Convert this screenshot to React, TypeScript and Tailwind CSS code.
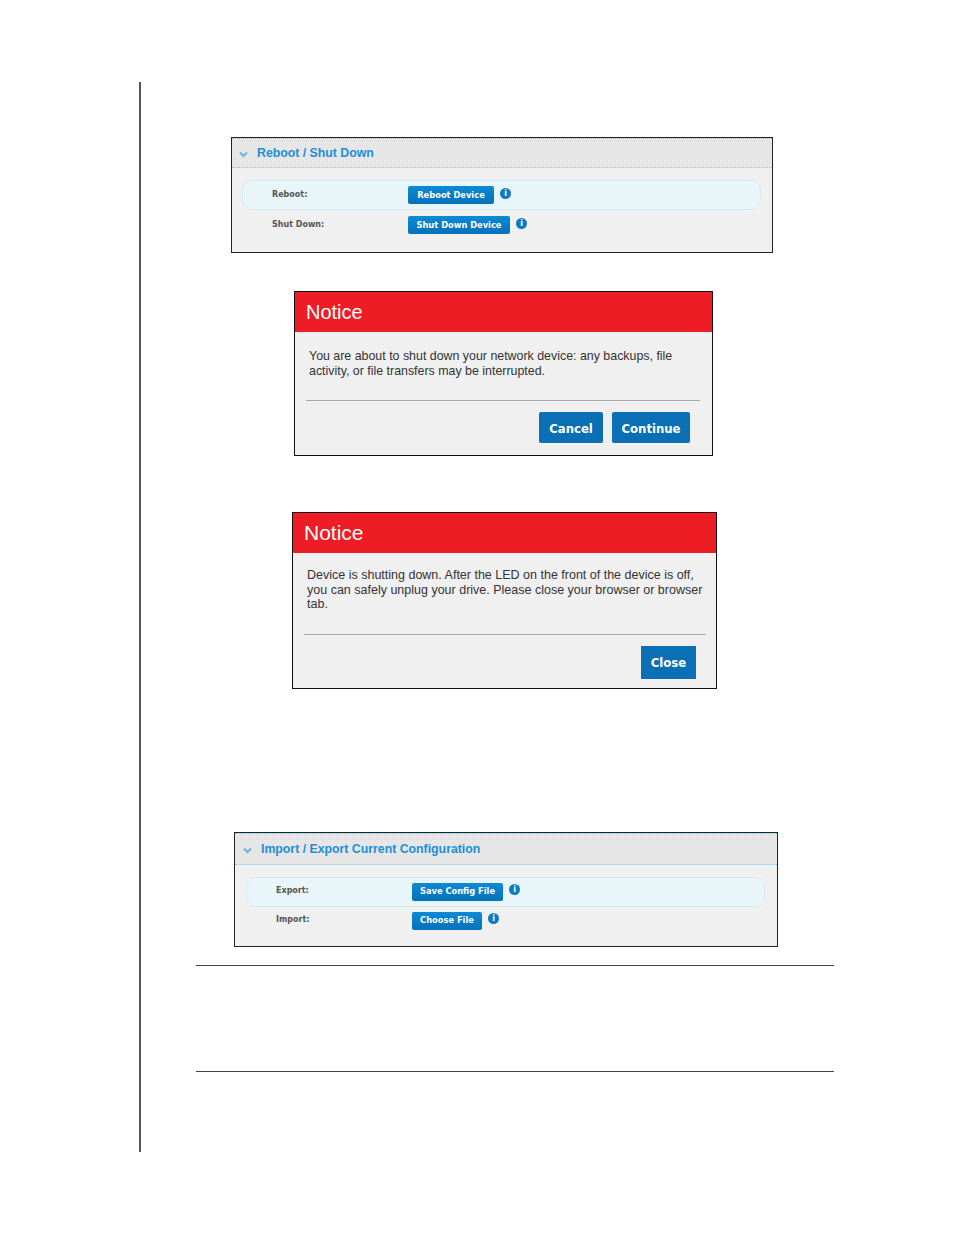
function InfoDot() {
  return (
    <span className="flex h-[11px] w-[11px] items-center justify-center rounded-full bg-[#0a7cc4] text-white">
      <span className="font-['DejaVu_Sans'] text-[8px] leading-none font-bold">i</span>
    </span>
  );
}

function Chevron() {
  return (
    <svg width="9" height="7" viewBox="0 0 9 7" className="mt-[2px]">
      <path d="M1 1.5 L4.5 5 L8 1.5" fill="none" stroke="#6fb2da" strokeWidth="2" />
    </svg>
  );
}

function SmallButton({ label, width, className }: { label: string; width: string; className: string }) {
  return (
    <span
      className={`flex h-[18px] items-center justify-center rounded-[2px] bg-gradient-to-b from-[#0d8ad6] to-[#0671b8] font-['DejaVu_Sans'] text-[8.3px] font-bold text-white ${width} ${className}`}
    >
      {label}
    </span>
  );
}

interface SettingRow {
  label: string;
  button: string;
  width: string;
}

function SettingsPanel({
  title,
  rows,
  className,
  headerClass,
  pillClass,
  rowClass,
  infoClass,
  labelClass,
  buttonClass,
}: {
  title: string;
  rows: SettingRow[];
  className: string;
  headerClass: string;
  pillClass: string;
  rowClass: string;
  infoClass: string;
  labelClass: string;
  buttonClass: string;
}) {
  return (
    <div className={`border border-[#222] bg-[#f0f0f0] ${className}`}>
      <div
        className={`flex items-center gap-[9px] border-y border-dotted border-[#8cc4e6] bg-[#e6e6e6] ${headerClass}`}
      >
        <Chevron />
        <span className="font-['Liberation_Sans'] text-[12.3px] font-bold text-[#1c8fd6]">{title}</span>
      </div>
      <div
        className={`mt-[12px] flex h-[30px] items-center rounded-[10px] border border-[#d6ecf5] bg-[#e8f5f9] pl-[29px] ${pillClass}`}
      >
        <span className={`w-[136px] font-['DejaVu_Sans'] text-[8px] font-bold text-[#555] ${labelClass}`}>
          {rows[0].label}
        </span>
        <SmallButton label={rows[0].button} width={rows[0].width} className={buttonClass} />
        <span className={infoClass}>
          <InfoDot />
        </span>
      </div>
      <div className={`flex h-[30px] items-center pl-[30px] ${rowClass}`}>
        <span className={`w-[136px] font-['DejaVu_Sans'] text-[8px] font-bold text-[#555] ${labelClass}`}>
          {rows[1].label}
        </span>
        <SmallButton label={rows[1].button} width={rows[1].width} className={buttonClass} />
        <span className={infoClass}>
          <InfoDot />
        </span>
      </div>
    </div>
  );
}

function NoticeButton({ label, className }: { label: string; className: string }) {
  return (
    <span
      className={`flex items-center justify-center rounded-[2px] bg-[#0a6fb5] pt-[4px] font-['DejaVu_Sans'] text-[11.7px] font-bold text-white ${className}`}
    >
      {label}
    </span>
  );
}

export default function App() {
  return (
    <div className="min-h-[1235px] bg-white pt-[82px] font-['Liberation_Sans',sans-serif]">
      <div className="ml-[139px] h-[1070px] w-[815px] border-l-2 border-[#555] pt-[55px]">
        <SettingsPanel
          className="ml-[90px] h-[116px] w-[542px]"
          headerClass="h-[30px] pl-[7px]"
          pillClass="mr-[11px] ml-[10px]"
          rowClass="mx-[10px]"
          infoClass="mb-[3px] ml-[6px]"
          labelClass="mb-[1px]"
          buttonClass="pt-[1px]"
          title="Reboot / Shut Down"
          rows={[
            { label: "Reboot:", button: "Reboot Device", width: "w-[86px]" },
            { label: "Shut Down:", button: "Shut Down Device", width: "w-[102px]" },
          ]}
        />

        <div className="mt-[38px] ml-[153px] h-[165px] w-[419px] border border-[#111] bg-[#f0f0f0]">
          <div className="flex h-[40px] items-center bg-[#ee1c25] pl-[11px] text-[20px] text-white">Notice</div>
          <p className="mt-[17px] ml-[14px] w-[385px] text-[12.4px] leading-[15px] text-[#333]">
            You are about to shut down your network device: any backups, file activity, or file transfers may be interrupted.
          </p>
          <div className="mt-[21px] mr-[12px] ml-[11px] border-t border-[#aaa]" />
          <div className="mt-[11px] mr-[22px] flex justify-end gap-[9px]">
            <NoticeButton label="Cancel" className="h-[31px] w-[64px]" />
            <NoticeButton label="Continue" className="h-[31px] w-[78px]" />
          </div>
        </div>

        <div className="mt-[56px] ml-[151px] h-[177px] w-[425px] border border-[#111] bg-[#f0f0f0]">
          <div className="flex h-[40px] items-center bg-[#ee1c25] pl-[11px] text-[21px] text-white">Notice</div>
          <p className="mt-[15px] ml-[14px] w-[403px] text-[12.5px] leading-[14.5px] text-[#333]">
            Device is shutting down. After the LED on the front of the device is off, you can safely unplug your drive. Please close your browser or browser tab.
          </p>
          <div className="mt-[22px] mr-[10px] ml-[11px] border-t border-[#aaa]" />
          <div className="mt-[11px] mr-[20px] flex justify-end">
            <NoticeButton label="Close" className="h-[33px] w-[55px] rounded-none" />
          </div>
        </div>

        <SettingsPanel
          className="mt-[143px] ml-[93px] h-[115px] w-[544px]"
          headerClass="h-[32px] pl-[8px]"
          pillClass="mr-[12px] ml-[11px]"
          rowClass="mx-[11px] -mt-[1px]"
          infoClass="mb-[5px] ml-[6px]"
          labelClass="mb-[3px]"
          buttonClass="pb-[1px]"
          title="Import / Export Current Configuration"
          rows={[
            { label: "Export:", button: "Save Config File", width: "w-[91px]" },
            { label: "Import:", button: "Choose File", width: "w-[70px]" },
          ]}
        />

        <div className="mt-[18px] ml-[55px] h-[107px] w-[638px] border-y border-[#444]" />
      </div>
    </div>
  );
}
